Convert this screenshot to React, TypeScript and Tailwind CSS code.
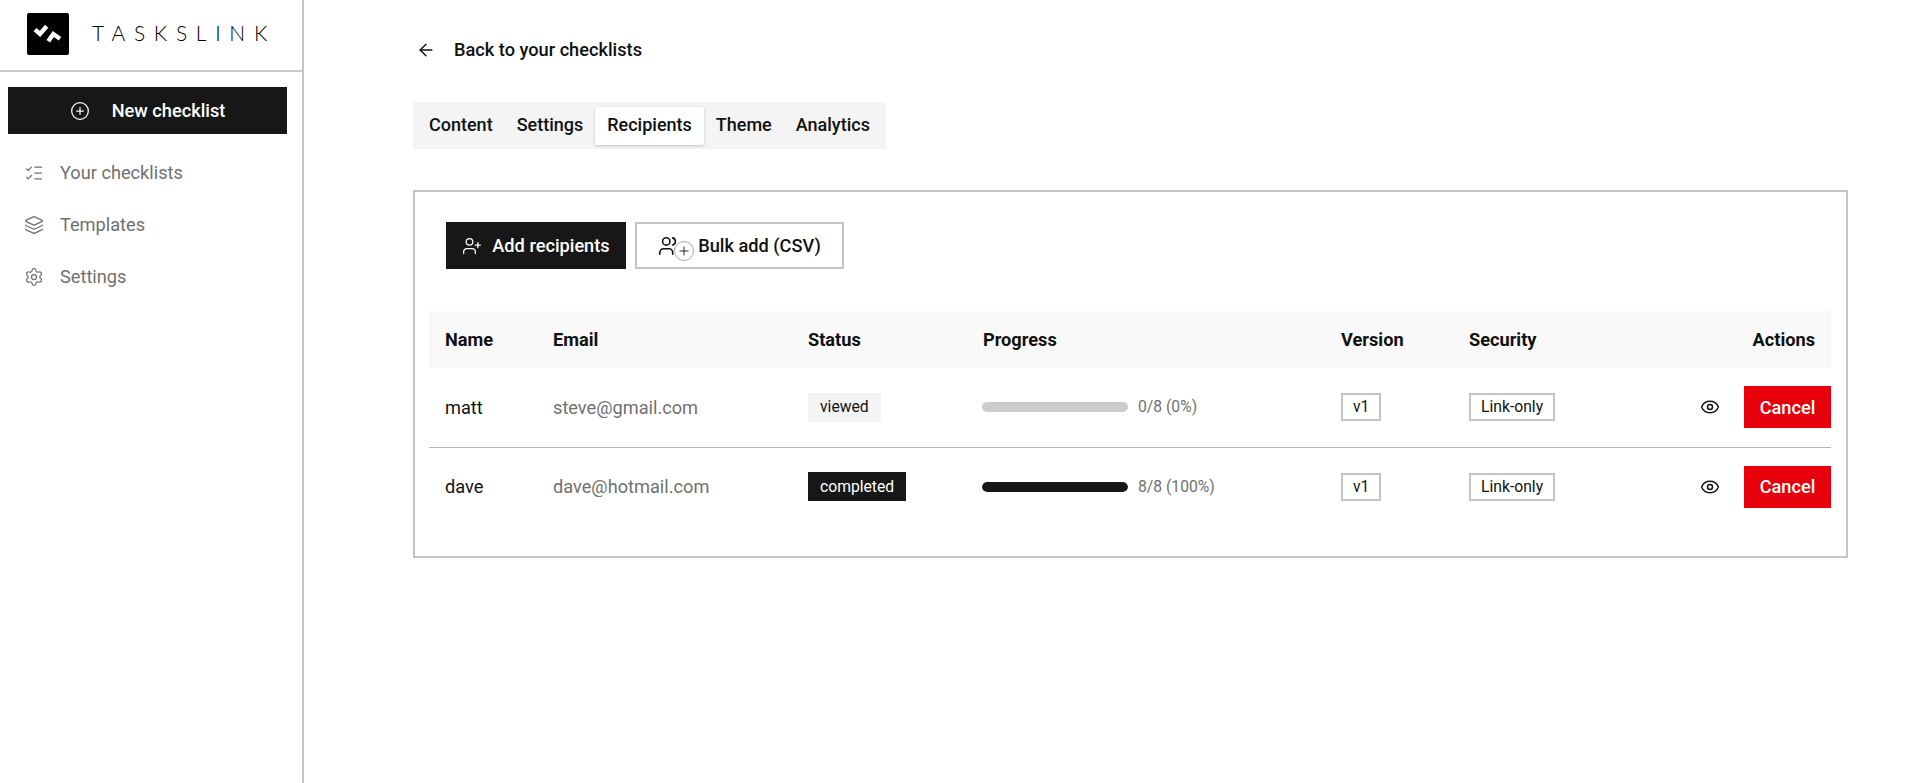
import { ArrowLeft, CirclePlus, Eye, Layers, ListChecks, Plus, Settings, UserPlus, Users } from 'lucide-react';

const NAV_ITEMS = [
  { label: 'Your checklists', icon: ListChecks },
  { label: 'Templates', icon: Layers },
  { label: 'Settings', icon: Settings },
];

const TABS = ['Content', 'Settings', 'Recipients', 'Theme', 'Analytics'];

const RECIPIENTS = [
  { name: 'matt', email: 'steve@gmail.com', status: 'viewed', done: 0, label: '0/8 (0%)' },
  { name: 'dave', email: 'dave@hotmail.com', status: 'completed', done: 100, label: '8/8 (100%)' },
];

function Logo() {
  return (
    <div className="flex h-[42px] w-[42px] items-center justify-center rounded-[2px] bg-black">
      <svg viewBox="0 0 42 42" className="h-[42px] w-[42px]" fill="none" stroke="#fff" strokeWidth="4.4">
        <path d="M8 16.7l5 4.3 6.7-7.7" />
        <path d="M21.3 28.3l5-7.3 6.7 4.7" />
      </svg>
    </div>
  );
}

function Sidebar() {
  return (
    <aside className="h-[783px] w-[304px] shrink-0 border-r-2 border-[#c4c4c4]">
      <div className="flex h-[72px] items-center border-b-2 border-[#c9c9c9] pb-[2px] pl-[27px]">
        <Logo />
        <span className="ml-[23px] pb-[2px] font-['Lato'] text-[21px] font-light tracking-[0.415em] text-black">TASKSLINK</span>
      </div>
      <div className="pl-[8px] pr-[15px] pt-[15px]">
        <button className="flex h-[47px] w-full items-center justify-center gap-[22px] bg-[#171717] text-[18.2px] font-medium text-white">
          <CirclePlus className="h-[20px] w-[20px]" strokeWidth={1.5} />
          New checklist
        </button>
      </div>
      <nav className="flex flex-col pl-[24px] pt-[13px]">
        {NAV_ITEMS.map((item) => (
          <a key={item.label} className="flex h-[52px] items-center gap-[16px] text-[18.2px] text-[#707070]">
            <item.icon className="h-[20px] w-[20px]" strokeWidth={1.5} />
            {item.label}
          </a>
        ))}
      </nav>
    </aside>
  );
}

function Badge({ status }: { status: string }) {
  const cls = status === 'completed' ? 'bg-[#171717] text-white' : 'bg-[#f4f4f4] text-[#111]';
  return <span className={`inline-flex h-[29px] items-center px-[12px] text-[15.7px] ${cls}`}>{status}</span>;
}

function Outlined({ children }: { children: string }) {
  return (
    <span className="inline-flex h-[28px] items-center border-2 border-[#c4c4c4] px-[10px] text-[15.7px] text-[#111]">
      {children}
    </span>
  );
}

function RecipientsTable() {
  return (
    <table className="w-[1402px] table-fixed border-collapse">
      <thead>
        <tr className="h-[57px] bg-[#f9f9f9] text-left text-[18.2px] font-bold text-[#111]">
          <th className="w-[108px] pl-[16px] font-bold">Name</th>
          <th className="w-[255px] pl-[16px] font-bold">Email</th>
          <th className="w-[175px] pl-[16px] font-bold">Status</th>
          <th className="w-[358px] pl-[16px] font-bold">Progress</th>
          <th className="w-[128px] pl-[16px] font-bold">Version</th>
          <th className="w-[110px] pl-[16px] font-bold">Security</th>
          <th className="pr-[16px] text-right font-bold">Actions</th>
        </tr>
      </thead>
      <tbody>
        {RECIPIENTS.map((r, i) => (
          <tr key={r.name} className={i === 0 ? 'h-[79px] border-b border-[#b8b8b8]' : 'h-[79px]'}>
            <td className="pl-[16px] text-[18.2px] text-[#111]">{r.name}</td>
            <td className="pl-[16px] text-[18.2px] text-[#707070]">{r.email}</td>
            <td className="pl-[16px]">
              <Badge status={r.status} />
            </td>
            <td className="pl-[15px]">
              <div className="flex items-center gap-[10px]">
                <div className="h-[10px] w-[146px] overflow-hidden rounded-full bg-[#cccccc]">
                  <div className="h-full rounded-full bg-[#171717]" style={{ width: `${r.done}%` }} />
                </div>
                <span className="text-[15.7px] text-[#707070]">{r.label}</span>
              </div>
            </td>
            <td className="pl-[16px]">
              <Outlined>v1</Outlined>
            </td>
            <td className="pl-[16px] whitespace-nowrap">
              <Outlined>Link-only</Outlined>
            </td>
            <td>
              <div className="flex items-center justify-end gap-[24px]">
                <Eye className="h-[20px] w-[20px] text-[#111]" strokeWidth={1.75} />
                <button className="h-[42px] w-[87px] bg-[#e7000b] text-[18.2px] font-medium text-white">Cancel</button>
              </div>
            </td>
          </tr>
        ))}
      </tbody>
    </table>
  );
}

export default function App() {
  return (
    <div className="flex h-[783px] bg-white font-['Roboto',sans-serif] text-[#111]">
      <Sidebar />
      <main className="flex-1 pl-[109px] pr-[72px]">
        <div className="flex h-[99px] items-center gap-[18px] pl-[3px] text-[18.2px] font-medium">
          <ArrowLeft className="h-[20px] w-[20px]" strokeWidth={1.75} />
          Back to your checklists
        </div>
        <div className="mt-[3px] flex h-[47px] w-[473px] items-center bg-[#f4f4f4] px-[4px] text-[18px] font-medium">
          {TABS.map((tab) => (
            <span
              key={tab}
              className={
                tab === 'Recipients'
                  ? 'flex h-[38px] items-center rounded-[2px] bg-white px-[12px] pb-[2px] shadow-[0_1px_3px_rgba(0,0,0,0.2)]'
                  : 'flex h-[38px] items-center px-[12px] pb-[2px]'
              }
            >
              {tab}
            </span>
          ))}
        </div>
        <section className="mt-[41px] h-[368px] w-[1435px] border-2 border-[#c4c4c4] px-[14px] pt-[30px]">
          <div className="flex gap-[9px] pl-[17px]">
            <button className="flex h-[47px] w-[180px] items-center justify-center gap-[10px] bg-[#171717] text-[18.2px] font-medium text-white">
              <UserPlus className="h-[20px] w-[20px]" strokeWidth={1.5} />
              Add recipients
            </button>
            <button className="flex h-[47px] w-[209px] items-center justify-center gap-[6px] border-2 border-[#c4c4c4] text-[18.2px] font-medium">
              <span className="relative h-[22px] w-[34px]">
                <Users className="h-[22px] w-[22px]" strokeWidth={1.75} />
                <span className="absolute left-[16px] top-[6px] flex h-[20px] w-[20px] items-center justify-center rounded-full border border-[#aaa] bg-white">
                  <Plus className="h-[14px] w-[14px]" strokeWidth={1.5} />
                </span>
              </span>
              Bulk add (CSV)
            </button>
          </div>
          <div className="mt-[42px]">
            <RecipientsTable />
          </div>
        </section>
      </main>
    </div>
  );
}
